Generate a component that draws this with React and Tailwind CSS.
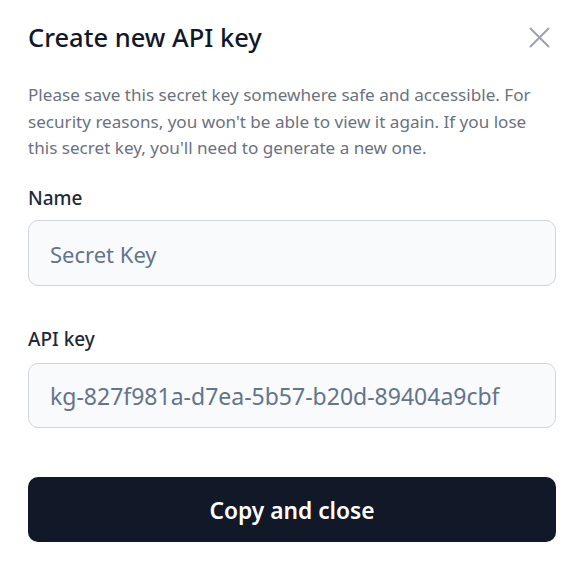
export default function App() {
  return (
    <div className="w-[576px] h-[571px] bg-white pl-[28px] pr-[20px] pt-[20px]" style={{ fontFamily: '"Noto Sans", "Open Sans", sans-serif' }}>
      <div className="flex items-start justify-between">
        <h1 className="text-[25.5px] leading-[34px] font-medium text-[#111827]">Create new API key</h1>
        <svg className="mt-[7px] mr-[6px]" width="21" height="21" viewBox="0 0 21 21" fill="none" stroke="#9ca3af" strokeWidth="2" strokeLinecap="round">
          <path d="M1.5 1.5 L19.5 19.5 M19.5 1.5 L1.5 19.5" />
        </svg>
      </div>
      <p className="mt-[28px] text-[17.1px] leading-[26.5px] text-[#6b7280]">
        Please save this secret key somewhere safe and accessible. For security reasons, you won't be able to view it again. If you lose this secret key, you'll need to generate a new one.
      </p>
      <div className="mt-[22px] text-[19px] leading-[28px] font-medium text-[#1f2937]">Name</div>
      <div className="mt-[8px] h-[66px] rounded-[10px] border border-[#d1d5db] bg-[#f8fafc] flex items-center px-[21px] pt-[3px] text-[22px] text-[#64748b]">Secret Key</div>
      <div className="mt-[39px] text-[19px] leading-[28px] font-medium text-[#1f2937]">API key</div>
      <div className="mt-[10px] h-[65px] rounded-[10px] border border-[#d1d5db] bg-[#f8fafc] flex items-center px-[21px] pt-[3px] text-[23px] text-[#64748b]">kg-827f981a-d7ea-5b57-b20d-89404a9cbf</div>
      <button className="mt-[49px] w-full h-[65px] rounded-[10px] bg-[#111827] pt-[4px] text-white text-[22.75px] font-semibold">Copy and close</button>
    </div>
  );
}
